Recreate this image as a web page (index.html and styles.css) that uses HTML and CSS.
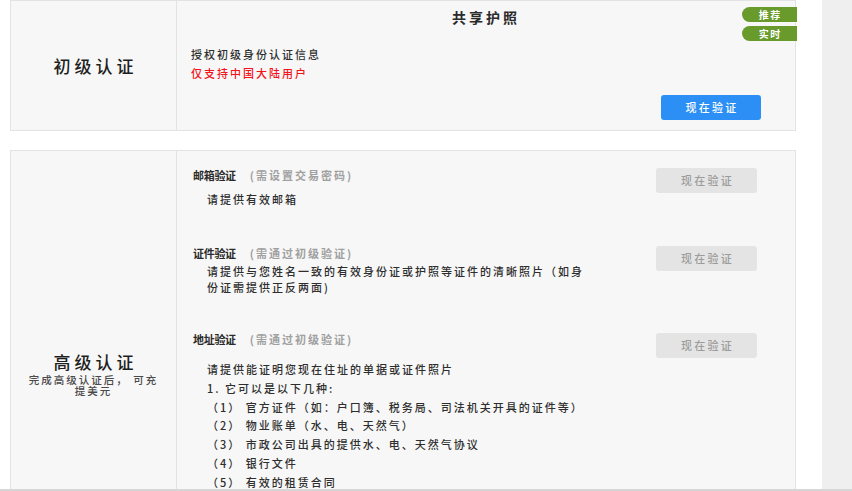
FILE: index.html
```html
<!DOCTYPE html>
<html lang="zh-CN">
<head>
<meta charset="utf-8">
<title>认证</title>
<link rel="stylesheet" href="styles.css">
</head>
<body>
<div class="page">
  <main class="main">
    <section class="card card-basic">
      <div class="card-label">
        <h2 class="label-title">初级认证</h2>
      </div>
      <div class="card-body basic-body">
        <h3 class="basic-title">共享护照</h3>
        <p class="basic-desc">授权初级身份认证信息</p>
        <p class="basic-desc basic-note">仅支持中国大陆用户</p>
        <button class="btn btn-primary">现在验证</button>
        <span class="badge badge-top">推荐</span>
        <span class="badge badge-bottom">实时</span>
      </div>
    </section>

    <section class="card card-adv">
      <div class="card-label">
        <h2 class="label-title">高级认证</h2>
        <p class="label-sub">完成高级认证后， 可充提美元</p>
      </div>
      <div class="card-body adv-body">
        <div class="item item-email">
          <div class="item-text">
            <h4 class="item-title">邮箱验证<span class="item-req">(需设置交易密码)</span></h4>
            <p class="item-desc item-desc-email">请提供有效邮箱</p>
          </div>
          <button class="btn btn-disabled">现在验证</button>
        </div>

        <div class="item item-id">
          <div class="item-text">
            <h4 class="item-title">证件验证<span class="item-req">(需通过初级验证)</span></h4>
            <p class="item-desc item-desc-id">请提供与您姓名一致的有效身份证或护照等证件的清晰照片（如身份证需提供正反两面)</p>
          </div>
          <button class="btn btn-disabled">现在验证</button>
        </div>

        <div class="item item-addr">
          <div class="item-text">
            <h4 class="item-title">地址验证<span class="item-req">(需通过初级验证)</span></h4>
            <ul class="addr-list">
              <li>请提供能证明您现在住址的单据或证件照片</li>
              <li>1. 它可以是以下几种:</li>
              <li>（1） 官方证件（如：户口簿、税务局、司法机关开具的证件等）</li>
              <li>（2） 物业账单（水、电、天然气）</li>
              <li>（3） 市政公司出具的提供水、电、天然气协议</li>
              <li>（4） 银行文件</li>
              <li>（5） 有效的租赁合同</li>
            </ul>
          </div>
          <button class="btn btn-disabled">现在验证</button>
        </div>
      </div>
    </section>
  </main>
  <aside class="side"></aside>
</div>
</body>
</html>
```

FILE: styles.css
```css
* {
  box-sizing: border-box;
  margin: 0;
  padding: 0;
}

html,
body {
  height: 100%;
}

body {
  font-family: "Noto Sans CJK SC", sans-serif;
  color: #2e2e2e;
  background: #fff;
  overflow: hidden;
}

.page {
  display: flex;
  height: 491px;
  border-bottom: 2px solid #d6d6d6;
  overflow: hidden;
}

.main {
  width: 822px;
  flex: none;
  padding: 0 26px 0 10px;
}

.side {
  flex: 1;
  background: #efefef;
}

/* cards */
.card {
  display: grid;
  grid-template-columns: 166px 1fr;
  border: 1px solid #e3e3e3;
  background: #f7f7f7;
}

.card-adv {
  margin-top: 19px;
}

.card-label {
  border-right: 1px solid #e3e3e3;
  display: flex;
  flex-direction: column;
  justify-content: center;
  align-items: center;
  text-align: center;
}

.label-title {
  font-size: 17px;
  font-weight: 500;
  letter-spacing: 4px;
  line-height: 20px;
  padding-left: 4px;
  color: #1e1e1e;
}

.label-sub {
  font-size: 10.5px;
  font-weight: 500;
  letter-spacing: 2px;
  line-height: 11px;
  color: #4a4a4a;
  padding: 0 16px;
  margin-top: 2px;
}

.card-body {
  position: relative;
}

/* basic card */
.basic-body {
  display: flex;
  flex-direction: column;
  padding: 7px 0 10px;
}

.basic-title {
  font-size: 14px;
  font-weight: bold;
  letter-spacing: 3px;
  line-height: 18px;
  text-align: center;
  color: #2a2a2a;
  margin-bottom: 19px;
}

.basic-desc {
  font-size: 11px;
  font-weight: 500;
  letter-spacing: 2px;
  line-height: 19px;
  padding-left: 14px;
}

.basic-note {
  color: #f3131b;
}

.btn {
  flex: none;
  height: 25px;
  border: none;
  border-radius: 3px;
  font-family: inherit;
  font-size: 11px;
  font-weight: 500;
  letter-spacing: 2.2px;
  text-indent: 2px;
  line-height: 25px;
}

.btn-primary {
  width: 100px;
  align-self: flex-end;
  margin: 12px 34px 0 0;
  background: #2b8ff5;
  color: #fff;
}

.btn-disabled {
  width: 101px;
  margin: 2px 0 0 auto;
  background: #e4e4e4;
  color: #9c9c9c;
}

.badge {
  position: absolute;
  right: -2px;
  width: 55px;
  height: 15px;
  border-radius: 8px 0 0 8px;
  background: #689b2b;
  color: #fff;
  font-size: 10px;
  font-weight: bold;
  letter-spacing: 1.5px;
  text-indent: 1.5px;
  line-height: 15px;
  text-align: center;
}

.badge-top {
  top: 6px;
}

.badge-bottom {
  top: 25px;
}

/* advanced card */
.adv-body {
  padding: 15px 38px 106px 16px;
}

.item {
  display: flex;
  align-items: flex-start;
}

.item-id {
  margin-top: 37px;
}

.item-addr {
  margin-top: 35px;
}

.item-addr .btn-disabled {
  margin-top: 3px;
}

.item-text {
  width: 400px;
}

.item-title {
  font-size: 11px;
  font-weight: bold;
  letter-spacing: -0.3px;
  line-height: 18px;
  color: #2a2a2a;
  white-space: nowrap;
}

.item-req {
  margin-left: 14px;
  font-size: 11px;
  letter-spacing: 2px;
  color: #a0a0a0;
}

.item-desc {
  font-size: 11px;
  font-weight: 500;
  letter-spacing: 2px;
  line-height: 16px;
  padding-left: 14px;
}

.item-desc-email {
  margin-top: 7px;
}

.item-desc-id {
  margin-top: 1px;
}

.addr-list {
  list-style: none;
  margin-top: 12px;
  padding-left: 14px;
  font-size: 11px;
  font-weight: 500;
  letter-spacing: 2px;
  line-height: 18.75px;
  white-space: nowrap;
}
```
